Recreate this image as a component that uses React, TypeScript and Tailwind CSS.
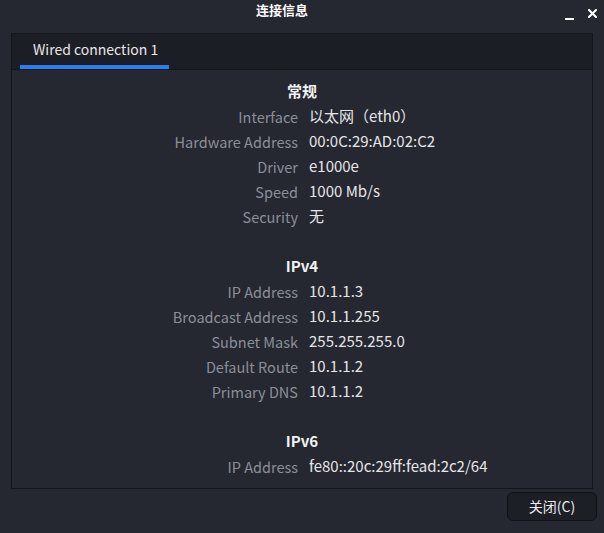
import React from 'react';

type Row = { label: string; value: string };
type Section = { title: string; rows: Row[] };

const SECTIONS: Section[] = [
  {
    title: '常规',
    rows: [
      { label: 'Interface', value: '以太网（eth0）' },
      { label: 'Hardware Address', value: '00:0C:29:AD:02:C2' },
      { label: 'Driver', value: 'e1000e' },
      { label: 'Speed', value: '1000 Mb/s' },
      { label: 'Security', value: '无' },
    ],
  },
  {
    title: 'IPv4',
    rows: [
      { label: 'IP Address', value: '10.1.1.3' },
      { label: 'Broadcast Address', value: '10.1.1.255' },
      { label: 'Subnet Mask', value: '255.255.255.0' },
      { label: 'Default Route', value: '10.1.1.2' },
      { label: 'Primary DNS', value: '10.1.1.2' },
    ],
  },
  {
    title: 'IPv6',
    rows: [{ label: 'IP Address', value: 'fe80::20c:29ff:fead:2c2/64' }],
  },
];

const InfoSection: React.FC<{ section: Section }> = ({ section }) => (
  <div className="flex flex-col">
    <div className="h-[25px] flex items-center justify-center font-bold text-[#f2f2f2]">{section.title}</div>
    {section.rows.map((row, i) => (
      <div key={i} className="h-[25px] grid grid-cols-2 gap-x-3 items-center">
        <div className="text-right text-[14.5px] text-[#8b8f99] whitespace-nowrap mr-[-2px]">{row.label}</div>
        <div className="text-left text-[#e6e6e6] whitespace-nowrap ml-[1px]">{row.value}</div>
      </div>
    ))}
  </div>
);

const App: React.FC = () => {
  return (
    <div
      className="w-[604px] h-[533px] bg-[#252731] flex flex-col text-[15px] overflow-hidden"
      style={{ fontFamily: '"Noto Sans CJK SC", "Noto Sans", sans-serif' }}
    >
      {/* title bar */}
      <div className="h-[33px] relative flex items-start justify-center">
        <span className="text-[13px] font-bold text-white mr-[40px] leading-[20px]">连接信息</span>
        <div className="absolute right-[7px] top-[6px] flex items-center gap-[14px]">
          <div className="w-[9px] h-[2px] bg-white mt-[12px]" />
          <svg width="9" height="9" viewBox="0 0 9 9" className="mt-[1px]">
            <path d="M1 1L8 8M8 1L1 8" stroke="white" strokeWidth="2" strokeLinecap="square" />
          </svg>
        </div>
      </div>

      {/* notebook */}
      <div className="mx-[11px] h-[456px] border border-[#15161b] flex flex-col">
        <div className="h-[36px] bg-[#1c1e25] border-b border-[#15161b] flex items-end px-[8px]">
          <div className="w-[149px] h-full flex flex-col">
            <div className="flex-1 flex items-center pl-[13px] text-[14px] text-[#e8e8e8]">Wired connection 1</div>
            <div className="h-[4px] bg-[#2a7ef2]" />
          </div>
        </div>
        <div className="flex-1 flex flex-col gap-[25px] pt-[9px]">
          {SECTIONS.map((s) => (
            <InfoSection key={s.title} section={s} />
          ))}
        </div>
      </div>

      {/* footer */}
      <div className="flex justify-end pr-[7px] pt-[3px]">
        <button className="w-[90px] h-[29px] rounded-[6px] bg-[#1d1f26] border border-[#111216] text-[#ececec] text-[14px]">
          关闭(C)
        </button>
      </div>
    </div>
  );
};

export default App;
